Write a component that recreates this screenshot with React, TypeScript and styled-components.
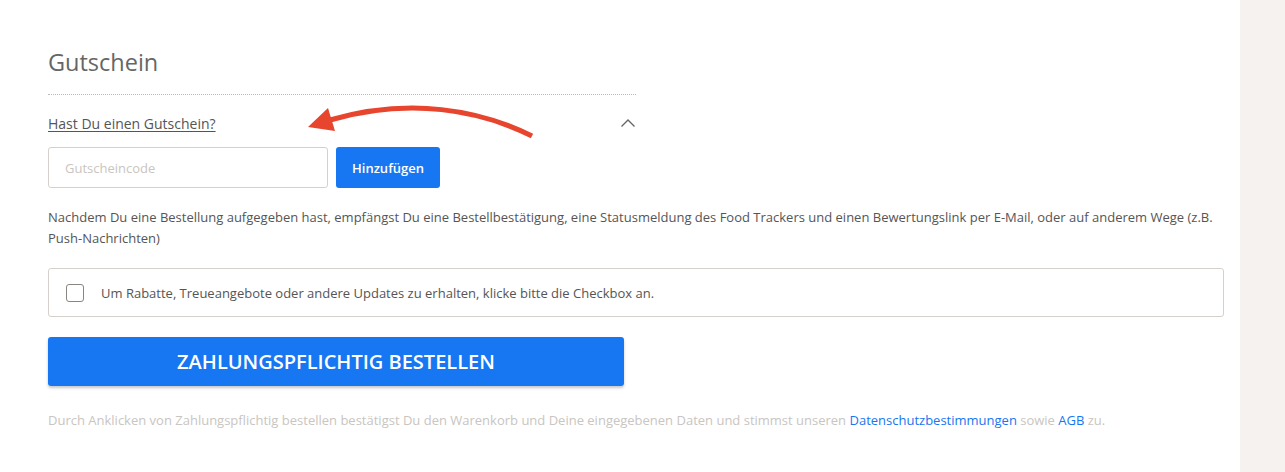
import styled, { createGlobalStyle } from "styled-components";

const GlobalStyle = createGlobalStyle`
  html, body {
    margin: 0;
    padding: 0;
    background: #fff;
    font-family: "Open Sans", "Liberation Sans", sans-serif;
  }
`;

const Page = styled.div`
  display: flex;
  width: 1285px;
  height: 472px;
`;

const Main = styled.div`
  position: relative;
  flex: 1;
  padding: 46px 16px 0 48px;
  background: #fff;
`;

const Side = styled.div`
  width: 45px;
  background: #f5f2ef;
`;

const Voucher = styled.div`
  width: 588px;
`;

const Title = styled.h2`
  margin: 0;
  font-size: 23.5px;
  font-weight: 400;
  line-height: 32px;
  color: #666;
  padding-bottom: 16px;
  border-bottom: 1px dotted #bbb;
`;

const Toggle = styled.div`
  display: flex;
  align-items: center;
  justify-content: space-between;
  height: 52px;
  padding-top: 4px;
  box-sizing: border-box;
`;

const ToggleLink = styled.a`
  font-size: 14px;
  color: #555;
  text-decoration: underline;
  text-underline-offset: 2px;
  cursor: pointer;
`;

const CodeRow = styled.div`
  display: flex;
  gap: 8px;
`;

const CodeInput = styled.input`
  box-sizing: border-box;
  width: 280px;
  height: 41px;
  padding: 0 16px;
  border: 1px solid #d5d0cb;
  border-radius: 3px;
  font-family: inherit;
  font-size: 13px;
  color: #333;
  outline: none;
  &::placeholder {
    color: #c9c5c1;
  }
`;

const SmallButton = styled.button`
  height: 41px;
  padding: 0 16px;
  border: none;
  border-radius: 3px;
  background: #1776f2;
  color: #fff;
  font-family: inherit;
  font-size: 13px;
  font-weight: 600;
  cursor: pointer;
`;

const Notice = styled.p`
  margin: 19px -14px 0 0;
  font-size: 13px;
  line-height: 21px;
  color: #555;
`;

const OptIn = styled.label`
  display: flex;
  align-items: center;
  gap: 17px;
  box-sizing: border-box;
  height: 49px;
  margin-top: 19px;
  padding: 0 17px;
  border: 1px solid #d5d0cb;
  border-radius: 3px;
  font-size: 13px;
  color: #555;
`;

const Box = styled.span`
  box-sizing: border-box;
  width: 18px;
  height: 18px;
  border: 1px solid #8a8580;
  border-radius: 3px;
  background: #fff;
`;

const OrderButton = styled.button`
  display: block;
  width: 576px;
  height: 49px;
  margin-top: 20px;
  border: none;
  border-radius: 3px;
  background: #1776f2;
  box-shadow: 0 2px 3px rgba(0, 0, 0, 0.22);
  color: #fff;
  font-family: inherit;
  font-size: 20px;
  font-weight: 600;
  cursor: pointer;
`;

const Legal = styled.p`
  margin: 24px 0 0;
  font-size: 13px;
  line-height: 21px;
  color: #c9c5c1;
`;

const LegalLink = styled.a`
  color: #1776f2;
  text-decoration: none;
`;

const Annotation = styled.svg`
  position: absolute;
  left: 300px;
  top: 95px;
  pointer-events: none;
`;

const Chevron = () => (
  <svg width="16" height="10" viewBox="0 0 16 10">
    <path d="M1.5 8.5 L8 2 L14.5 8.5" fill="none" stroke="#666" strokeWidth="1.4" />
  </svg>
);

export default function App() {
  return (
    <Page>
      <GlobalStyle />
      <Main>
        <Voucher>
          <Title>Gutschein</Title>
          <Toggle>
            <ToggleLink>Hast Du einen Gutschein?</ToggleLink>
            <Chevron />
          </Toggle>
        </Voucher>
        <CodeRow>
          <CodeInput placeholder="Gutscheincode" />
          <SmallButton>Hinzufügen</SmallButton>
        </CodeRow>
        <Notice>
          Nachdem Du eine Bestellung aufgegeben hast, empfängst Du eine Bestellbestätigung, eine
          Statusmeldung des Food Trackers und einen Bewertungslink per E-Mail, oder auf anderem Wege
          (z.B. Push-Nachrichten)
        </Notice>
        <OptIn>
          <Box />
          Um Rabatte, Treueangebote oder andere Updates zu erhalten, klicke bitte die Checkbox an.
        </OptIn>
        <OrderButton>ZAHLUNGSPFLICHTIG BESTELLEN</OrderButton>
        <Legal>
          Durch Anklicken von Zahlungspflichtig bestellen bestätigst Du den Warenkorb und Deine
          eingegebenen Daten und stimmst unseren{" "}
          <LegalLink>Datenschutzbestimmungen</LegalLink> sowie <LegalLink>AGB</LegalLink> zu.
        </Legal>

        <Annotation width="250" height="50" viewBox="0 0 250 50">
          <path
            d="M232 41 C 180 15, 110 2, 30 25"
            fill="none"
            stroke="#e8452f"
            strokeWidth="5"
            strokeLinecap="butt"
          />
          <polygon points="8,32 28,13 35,36" fill="#e8452f" />
        </Annotation>
      </Main>
      <Side />
    </Page>
  );
}
